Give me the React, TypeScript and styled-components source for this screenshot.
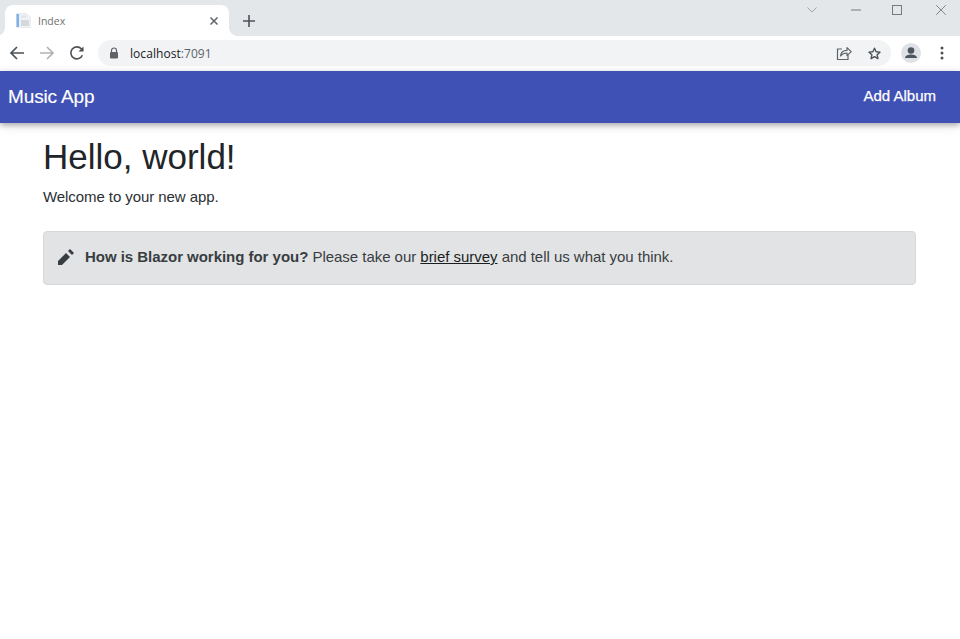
import React from "react";
import styled, { createGlobalStyle } from "styled-components";

const Global = createGlobalStyle`
  html, body { margin: 0; padding: 0; background: #fff; }
  body { font-family: "Liberation Sans", Arial, sans-serif; color: #212529; }
`;

const Page = styled.div`
  width: 960px;
  height: 639px;
  overflow: hidden;
  display: flex;
  flex-direction: column;
  background: #fff;
`;

const TabStrip = styled.div`
  height: 36px;
  flex: none;
  box-sizing: border-box;
  padding: 5px 0 0 5px;
  background: #e4e7ea;
  display: flex;
  align-items: stretch;
`;

const Tab = styled.div`
  position: relative;
  width: 224px;
  box-sizing: border-box;
  padding: 0 10px 0 11px;
  background: #fff;
  border-radius: 8px 8px 0 0;
  display: flex;
  align-items: center;
  gap: 7px;
  &::before, &::after {
    content: "";
    position: absolute;
    bottom: 0;
    width: 8px;
    height: 8px;
  }
  &::before { left: -8px; background: radial-gradient(circle at 0 0, transparent 7.5px, #fff 8px); }
  &::after { right: -8px; background: radial-gradient(circle at 100% 0, transparent 7.5px, #fff 8px); }
`;

const TabTitle = styled.span`
  flex: 1;
  font-family: "Open Sans", "Liberation Sans", sans-serif;
  font-size: 10.5px;
  color: #6f6f6f;
`;

const NewTab = styled.div`
  width: 24px;
  margin-left: 8px;
  display: flex;
  align-items: center;
  justify-content: center;
`;

const WindowControls = styled.div`
  margin-left: auto;
  height: 20px;
  margin-top: -5px;
  display: flex;
  align-items: center;
  padding-right: 14px;
`;

const Chevron = styled.svg`
  width: 10px;
  height: 6px;
`;

const WindowGlyph = styled.svg<{ $gap: number }>`
  width: 10px;
  height: 10px;
  margin-left: ${(p) => p.$gap}px;
`;

const Toolbar = styled.div`
  height: 35px;
  flex: none;
  box-sizing: border-box;
  background: #fff;
  display: flex;
  align-items: center;
  padding: 0 0 1px 7px;
`;

const NavIcon = styled.div`
  width: 20px;
  height: 20px;
  margin-right: 10px;
  flex: none;
  display: flex;
  align-items: center;
  justify-content: center;
`;

const Omnibox = styled.div`
  width: 793px;
  height: 26px;
  flex: none;
  margin-left: 1px;
  box-sizing: border-box;
  border-radius: 13px;
  background: #f1f3f4;
  padding: 0 2px 0 11px;
  display: flex;
  align-items: center;
`;

const Url = styled.span`
  margin-left: 11px;
  flex: 1;
  font-family: "Open Sans", "Liberation Sans", sans-serif;
  font-size: 12px;
  letter-spacing: 0.06px;
  color: #202124;
`;

const UrlPort = styled.span`
  color: #5f6368;
`;

const OmniAction = styled.div`
  width: 30px;
  height: 20px;
  display: flex;
  align-items: center;
  justify-content: center;
`;

const Avatar = styled.div`
  width: 20px;
  height: 20px;
  flex: none;
  margin-left: 10px;
  border-radius: 50%;
  background: #dee1e6;
  display: flex;
  align-items: center;
  justify-content: center;
  overflow: hidden;
`;

const MenuDots = styled.div`
  margin-left: 11px;
  width: 20px;
  flex: none;
  display: flex;
  justify-content: center;
`;

const Navbar = styled.nav`
  position: relative;
  height: 52px;
  flex: none;
  box-sizing: border-box;
  background: #3f51b5;
  color: #fff;
  display: flex;
  align-items: center;
  justify-content: space-between;
  padding: 0 24px 2px 8px;
  box-shadow: 0 2px 5px rgba(0, 0, 0, 0.26), 0 3px 10px rgba(0, 0, 0, 0.12);
`;

const Brand = styled.a`
  font-size: 19px;
  letter-spacing: -0.13px;
  color: #fff;
  margin-top: 1px;
  -webkit-text-stroke: 0.15px #fff;
`;

const NavLink = styled.a`
  font-size: 15px;
  color: #fff;
  margin-bottom: 1px;
  -webkit-text-stroke: 0.25px #fff;
`;

const Main = styled.main`
  padding: 12px 44px 0 43px;
`;

const Title = styled.h1`
  margin: 0 0 7px;
  font-size: 35px;
  line-height: 43px;
  font-weight: 400;
  color: #212529;
`;

const Lead = styled.p`
  margin: 0 0 22px;
  font-size: 15px;
  line-height: 24px;
  letter-spacing: -0.07px;
  color: #2b2f33;
`;

const Alert = styled.div`
  height: 54px;
  box-sizing: border-box;
  border: 1px solid #d6d8db;
  border-radius: 4px;
  background: #e2e3e5;
  color: #383d41;
  display: flex;
  align-items: center;
  padding: 0 0 3px 14px;
  font-size: 15px;
  letter-spacing: -0.03px;
  white-space: pre;
`;

const PencilSlot = styled.span`
  width: 16px;
  margin-right: 11px;
  display: flex;
`;

const Strong = styled.strong`
  font-weight: 700;
`;

const Survey = styled.a`
  color: #1b1e21;
  text-decoration: underline;
`;

const Stroke = { fill: "none", stroke: "#5f6368", strokeWidth: 1.6 };

export default function App() {
  return (
    <Page>
      <Global />
      <TabStrip>
        <Tab>
          <svg width="15" height="15" viewBox="0 0 15 15">
            <path d="M.5.5h10l4 4v10H.5z" fill="#eef1f5" stroke="#dfe3e8" strokeWidth="0.6" />
            <rect x="0.5" y="1" width="2.5" height="13" fill="#7fb2e6" />
            <rect x="5" y="7" width="8" height="6" fill="#d5d9dc" />
            <rect x="5" y="2.500" width="5" height="2" fill="#dfe3e8" />
          </svg>
          <TabTitle>Index</TabTitle>
          <svg width="10" height="10" viewBox="0 0 10 10">
            <path d="M1.5 1.5l7 7M8.5 1.5l-7 7" stroke="#5f6368" strokeWidth="1.5" fill="none" />
          </svg>
        </Tab>
        <NewTab>
          <svg width="12" height="12" viewBox="0 0 12 12">
            <path d="M6 0v12M0 6h12" stroke="#4d5156" strokeWidth="1.6" fill="none" />
          </svg>
        </NewTab>
        <WindowControls>
          <Chevron viewBox="0 0 10 6">
            <path d="M.5.5L5 5 9.5.5" fill="none" stroke="#9a9c9f" strokeWidth="0.9" />
          </Chevron>
          <WindowGlyph $gap={34} viewBox="0 0 10 10">
            <path d="M0 5h10" stroke="#77797c" strokeWidth="1" />
          </WindowGlyph>
          <WindowGlyph $gap={31} viewBox="0 0 10 10">
            <rect x=".5" y=".5" width="9" height="9" fill="none" stroke="#77797c" strokeWidth="1" />
          </WindowGlyph>
          <WindowGlyph $gap={34} viewBox="0 0 10 10">
            <path d="M.2.2l9.600 9.600M9.800.2L.2 9.800" stroke="#77797c" strokeWidth="0.9" fill="none" />
          </WindowGlyph>
        </WindowControls>
      </TabStrip>
      <Toolbar>
        <NavIcon>
          <svg width="16" height="16" viewBox="0 0 16 16">
            <path d="M15 8H2M8 2L2 8l6 6" fill="none" stroke="#4d5156" strokeWidth="1.7" />
          </svg>
        </NavIcon>
        <NavIcon>
          <svg width="16" height="16" viewBox="0 0 16 16">
            <path d="M1 8h13M8 2l6 6-6 6" fill="none" stroke="#b0b2b5" strokeWidth="1.7" />
          </svg>
        </NavIcon>
        <NavIcon>
          <svg width="16" height="16" viewBox="0 0 16 16">
            <path d="M13.4 10.2A6 6 0 1 1 12.3 3.8L14 5.6" {...Stroke} stroke="#4d5156" />
            <path d="M14.5 1.5v5h-5z" fill="#4d5156" />
          </svg>
        </NavIcon>
        <Omnibox>
          <svg width="10" height="12" viewBox="0 0 10 12">
            <path d="M2.5 5V3.5a2.5 2.5 0 0 1 5 0V5" fill="none" stroke="#5f6368" strokeWidth="1.2" />
            <rect x="1" y="5" width="8" height="6.5" rx="1" fill="#5f6368" />
          </svg>
          <Url>
            localhost<UrlPort>:7091</UrlPort>
          </Url>
          <OmniAction>
            <svg width="16" height="16" viewBox="0 0 16 16">
              <path d="M6 4H1.5v10.5h10.5V10" fill="none" stroke="#5f6368" strokeWidth="1.2" />
              <path d="M4.5 11c.4-3.6 3-5.6 6.5-5.6V2.6l4.2 4-4.2 4V8C8.300 8 6 9 4.500 11z" fill="none" stroke="#5f6368" strokeWidth="1.2" strokeLinejoin="round" />
            </svg>
          </OmniAction>
          <OmniAction>
            <svg width="15" height="15" viewBox="0 0 24 24">
              <path d="M12 3.500l2.600 5.700 6.200.7-4.600 4.200 1.300 6.100L12 17.100l-5.500 3.100 1.300-6.100L3.200 9.900l6.200-.7z" fill="none" stroke="#4d5156" strokeWidth="2.200" strokeLinejoin="round" />
            </svg>
          </OmniAction>
        </Omnibox>
        <Avatar>
          <svg width="20" height="20" viewBox="0 0 20 20">
            <circle cx="10" cy="7.500" r="3.300" fill="#4d5560" />
            <path d="M4 15c0-2.600 3.500-3.600 6-3.600s6 1 6 3.600z" fill="#4d5560" />
          </svg>
        </Avatar>
        <MenuDots>
          <svg width="4" height="14" viewBox="0 0 4 14">
            <circle cx="2" cy="2" r="1.500" fill="#4d5156" />
            <circle cx="2" cy="7" r="1.500" fill="#4d5156" />
            <circle cx="2" cy="12" r="1.500" fill="#4d5156" />
          </svg>
        </MenuDots>
      </Toolbar>
      <Navbar>
        <Brand>Music App</Brand>
        <NavLink>Add Album</NavLink>
      </Navbar>
      <Main>
        <Title>Hello, world!</Title>
        <Lead>Welcome to your new app.</Lead>
        <Alert>
          <PencilSlot>
            <svg width="16" height="16" viewBox="0 0 8 8">
              <path d="M6 0L5 1l2 2 1-1zM4 2L0 6v2h2l4-4z" fill="#383d41" />
            </svg>
          </PencilSlot>
          <Strong>How is Blazor working for you?</Strong> Please take our <Survey>brief survey</Survey> and tell us what you think.
        </Alert>
      </Main>
    </Page>
  );
}
